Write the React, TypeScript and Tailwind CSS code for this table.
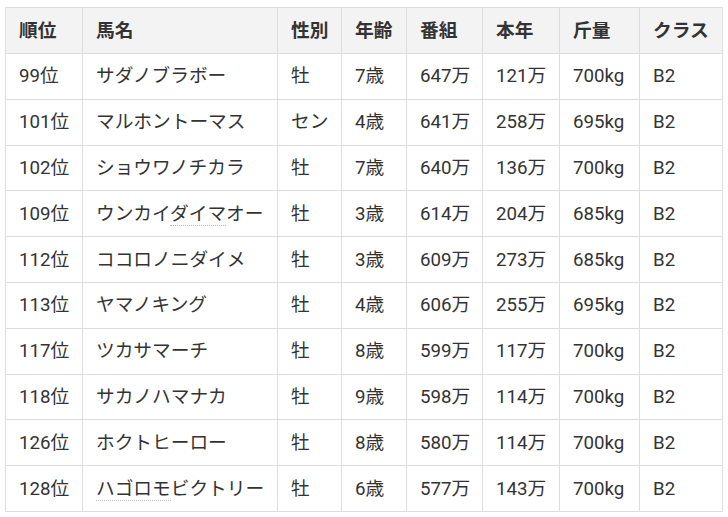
import React from "react";

type Row = {
  rank: string;
  name: React.ReactNode;
  sex: string;
  age: string;
  prize: string;
  year: string;
  weight: string;
  cls: string;
};

const Dot = ({ children }: { children: React.ReactNode }) => (
  <span className="border-b border-dotted border-[#bdbdbd]">{children}</span>
);

const rows: Row[] = [
  { rank: "99位", name: "サダノブラボー", sex: "牡", age: "7歳", prize: "647万", year: "121万", weight: "700kg", cls: "B2" },
  { rank: "101位", name: "マルホントーマス", sex: "セン", age: "4歳", prize: "641万", year: "258万", weight: "695kg", cls: "B2" },
  { rank: "102位", name: "ショウワノチカラ", sex: "牡", age: "7歳", prize: "640万", year: "136万", weight: "700kg", cls: "B2" },
  {
    rank: "109位",
    name: (
      <>
        ウンカイ<Dot>ダイマ</Dot>オー
      </>
    ),
    sex: "牡",
    age: "3歳",
    prize: "614万",
    year: "204万",
    weight: "685kg",
    cls: "B2",
  },
  { rank: "112位", name: "ココロノニダイメ", sex: "牡", age: "3歳", prize: "609万", year: "273万", weight: "685kg", cls: "B2" },
  { rank: "113位", name: "ヤマノキング", sex: "牡", age: "4歳", prize: "606万", year: "255万", weight: "695kg", cls: "B2" },
  { rank: "117位", name: "ツカサマーチ", sex: "牡", age: "8歳", prize: "599万", year: "117万", weight: "700kg", cls: "B2" },
  { rank: "118位", name: "サカノハマナカ", sex: "牡", age: "9歳", prize: "598万", year: "114万", weight: "700kg", cls: "B2" },
  { rank: "126位", name: "ホクトヒーロー", sex: "牡", age: "8歳", prize: "580万", year: "114万", weight: "700kg", cls: "B2" },
  {
    rank: "128位",
    name: (
      <>
        <Dot>ハゴロモ</Dot>ビクトリー
      </>
    ),
    sex: "牡",
    age: "6歳",
    prize: "577万",
    year: "143万",
    weight: "700kg",
    cls: "B2",
  },
];

const headers = ["順位", "馬名", "性別", "年齢", "番組", "本年", "斤量", "クラス"];
const widths = ["w-[77px]", "w-[195px]", "w-[64px]", "w-[65px]", "w-[76px]", "w-[77px]", "w-[80px]", "w-[83px]"];

export default function App() {
  return (
    <div
      className="bg-white w-[728px] h-[517px] pt-[7px] pl-[5px] text-[#333]"
      style={{ fontFamily: 'Roboto, "Noto Sans CJK JP", sans-serif' }}
    >
      <table className="table-fixed border-collapse w-[717px] text-[18.7px]">
        <colgroup>
          {widths.map((w, i) => (
            <col key={i} className={w} />
          ))}
        </colgroup>
        <thead>
          <tr className="h-[46px] bg-[#f3f3f3]">
            {headers.map((h) => (
              <th
                key={h}
                className="border border-[#dddddd] px-[13px] text-left font-bold text-[#333] leading-[22px] whitespace-nowrap"
              >
                {h}
              </th>
            ))}
          </tr>
        </thead>
        <tbody>
          {rows.map((r) => (
            <tr key={r.rank} className="h-[45.8px]">
              {[r.rank, r.name, r.sex, r.age, r.prize, r.year, r.weight, r.cls].map((c, i) => (
                <td
                  key={i}
                  className="border border-[#dddddd] px-[13px] leading-[22px] whitespace-nowrap"
                >
                  {c}
                </td>
              ))}
            </tr>
          ))}
        </tbody>
      </table>
    </div>
  );
}
